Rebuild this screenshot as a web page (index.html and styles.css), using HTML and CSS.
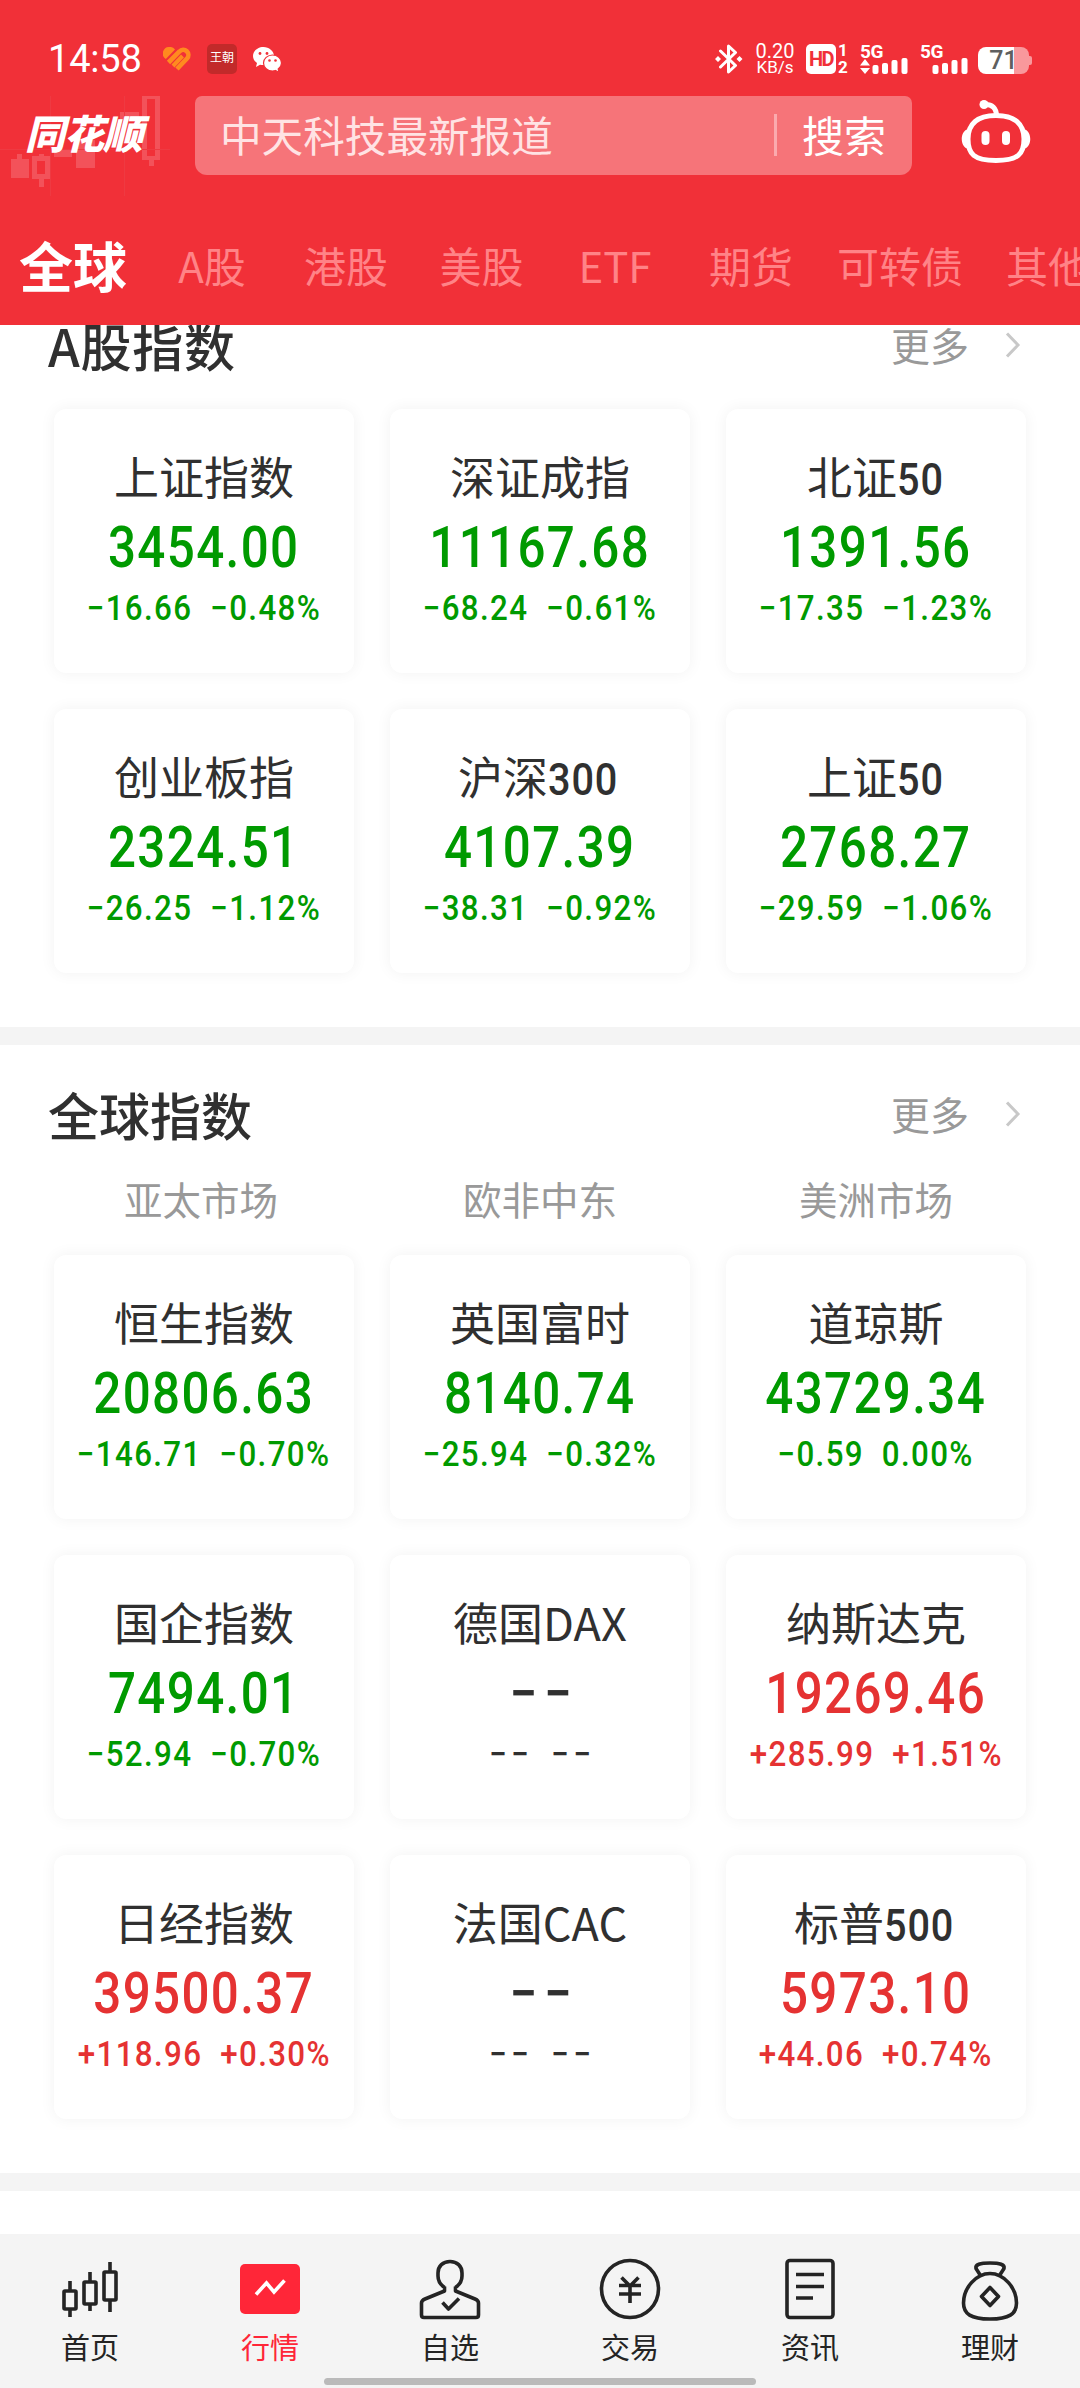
FILE: index.html
```html
<!DOCTYPE html>
<html lang="zh-CN">
<head>
<meta charset="utf-8">
<title>同花顺 行情</title>
<link rel="stylesheet" href="styles.css">
</head>
<body>
<div class="app">
  <header class="header">
    <svg class="backdrop" width="170" height="100" viewBox="0 96 170 100">
      <g fill="#f3525a">
        <path d="M11 159h6v-5h5v5h7v19H11z"/>
        <path fill-rule="evenodd" d="M32 156h7v-2h5v2h6v23h-6v8h-5v-8h-7zM37 161v13h8v-13z"/>
        <path d="M54 150h18v7H54zM76 140h19v28H76zM120 112h19v8h-19z"/>
        <path fill-rule="evenodd" d="M142 96h18v64h-6v6h-5v-6h-7zM147 99v57h8V99z"/>
      </g>
      <g fill="none" stroke="#ee3a42" stroke-width="1"><path d="M0 149.500h170M50.500 96v100M124.500 96v100"/></g>
    </svg>
    <div class="status">
      <span class="time">14:58</span>
      <svg class="s-heart" width="28" height="25" viewBox="0 0 28 25"><g fill="none" stroke="#ff8a1f"><path d="M6.500 0a6 6 0 0 1 5.500 2.500L2.800 12A6.500 6.500 0 0 1 6.500 0z" fill="#ff8a1f" stroke="none"/><path d="M5.500 15.500L16.500 4.500a4.800 4.800 0 0 1 7.500 7L14 22" stroke-width="4.600"/><path d="M10 19L19.500 9" stroke-width="4"/></g></svg>
      <span class="s-app">王朝</span>
      <svg class="s-wechat" width="29" height="26" viewBox="0 0 29 26"><path fill="#fff" d="M10.500 0C4.700 0 0 4 0 9c0 3 1.600 5.400 4 7l-1 4 4-2.300c1 .3 2.200.4 3.500.4C16 18 21 14 21 9S16 0 10.500 0z"/><path fill="#fff" stroke="#f13038" stroke-width="1.200" d="M19.500 8C14.500 8 10.500 11.700 10.500 16s4 8 9 8c1.100 0 2.100-.2 3-.5l3.500 2-.8-3.500c2-1.500 3.300-3.500 3.300-6C28.500 11.700 24.500 8 19.500 8z"/><g fill="#f13038"><circle cx="7" cy="6.500" r="1.400"/><circle cx="14" cy="6.500" r="1.400"/><circle cx="16.500" cy="13.500" r="1.300"/><circle cx="22.500" cy="13.500" r="1.300"/></g></svg>
      <span class="spacer"></span>
      <svg class="s-bt" width="28" height="30" viewBox="0 0 28 30"><path fill="none" stroke="#fff" stroke-width="3" stroke-linejoin="round" stroke-linecap="round" d="M5.500 7l15 14.500-7 6.500V2l7 6.500L5.500 23"/><path fill="#fff" d="M0 15l3-3 3 3-3 3zM21.500 15l3-3 3 3-3 3z"/></svg>
      <span class="speed"><b>0.20</b><i>KB/s</i></span>
      <span class="hd">HD</span>
      <span class="sims"><b>1</b><b>2</b></span>
      <span class="cell cell-one"><b>5G</b><svg width="48" height="30" viewBox="0 0 48 30"><g fill="#fff"><path d="M0 21.500l5-6.500 5 6.500zM0 24h10l-5 6z"/><rect x="12.500" y="21" width="6" height="9" rx="2"/><rect x="22" y="19" width="6" height="11" rx="2"/><rect x="31.500" y="16" width="6" height="14" rx="2"/><rect x="41.500" y="14" width="6" height="16" rx="2"/></g></svg></span>
      <span class="cell cell-two"><b>5G</b><svg width="48" height="30" viewBox="0 0 48 30"><g fill="#fff"><rect x="12.500" y="21" width="6" height="9" rx="2"/><rect x="22" y="19" width="6" height="11" rx="2"/><rect x="31.500" y="16" width="6" height="14" rx="2"/><rect x="41.500" y="14" width="6" height="16" rx="2"/></g></svg></span>
      <span class="battery">71</span>
    </div>
    <div class="toolbar">
      <div class="logo">同花顺</div>
      <div class="search"><span class="query">中天科技最新报道</span><span class="bar"></span><span class="go">搜索</span></div>
      <svg class="robot" width="72" height="66" viewBox="0 0 72 66"><g fill="none" stroke="#fff" stroke-width="5"><path d="M36 16.500C17 16.500 8 25 8 40S14 61.500 36 61.500 64 55 64 40 55 16.500 36 16.500z"/><path d="M24.500 5.500C32 5 36.500 9 36.500 17"/></g><g fill="#fff"><circle cx="24" cy="5.500" r="4.500"/><path d="M7 30.500C0 33 0 47 7 49.500zM65 30.500C72 33 72 47 65 49.500z"/><rect x="21.500" y="32" width="8" height="14" rx="4"/><rect x="42" y="32" width="8" height="14" rx="4"/></g></svg>
    </div>
    <nav class="tabs">
      <span class="tab active">全球</span><span class="tab">A股</span><span class="tab">港股</span><span class="tab">美股</span><span class="tab">ETF</span><span class="tab">期货</span><span class="tab">可转债</span><span class="tab">其他</span>
    </nav>
  </header>

  <main class="content">
    <section class="section section-a">
      <div class="head"><h2>A股指数</h2><span class="more">更多<svg width="16" height="26" viewBox="0 0 16 26"><path d="M2 1.500L13 13 2 24.500" fill="none" stroke="#c8c8c8" stroke-width="3"/></svg></span></div>
      <div class="grid">
        <article class="card down"><h3>上证指数</h3><strong>3454.00</strong><p><span>−16.66</span><span>−0.48%</span></p></article>
        <article class="card down"><h3>深证成指</h3><strong>11167.68</strong><p><span>−68.24</span><span>−0.61%</span></p></article>
        <article class="card down"><h3>北证<em>50</em></h3><strong>1391.56</strong><p><span>−17.35</span><span>−1.23%</span></p></article>
        <article class="card down"><h3>创业板指</h3><strong>2324.51</strong><p><span>−26.25</span><span>−1.12%</span></p></article>
        <article class="card down"><h3>沪深<em>300</em></h3><strong>4107.39</strong><p><span>−38.31</span><span>−0.92%</span></p></article>
        <article class="card down"><h3>上证<em>50</em></h3><strong>2768.27</strong><p><span>−29.59</span><span>−1.06%</span></p></article>
      </div>
    </section>
    <section class="section section-global">
      <div class="head"><h2>全球指数</h2><span class="more">更多<svg width="16" height="26" viewBox="0 0 16 26"><path d="M2 1.500L13 13 2 24.500" fill="none" stroke="#c8c8c8" stroke-width="3"/></svg></span></div>
      <div class="regions"><span>亚太市场</span><span>欧非中东</span><span>美洲市场</span></div>
      <div class="grid">
        <article class="card down"><h3>恒生指数</h3><strong>20806.63</strong><p><span>−146.71</span><span>−0.70%</span></p></article>
        <article class="card down"><h3>英国富时</h3><strong>8140.74</strong><p><span>−25.94</span><span>−0.32%</span></p></article>
        <article class="card down"><h3>道琼斯</h3><strong>43729.34</strong><p><span>−0.59</span><span>0.00%</span></p></article>
        <article class="card down"><h3>国企指数</h3><strong>7494.01</strong><p><span>−52.94</span><span>−0.70%</span></p></article>
        <article class="card flat"><h3>德国DAX</h3><strong>−−</strong><p><span>−−</span><span>−−</span></p></article>
        <article class="card up"><h3>纳斯达克</h3><strong>19269.46</strong><p><span>+285.99</span><span>+1.51%</span></p></article>
        <article class="card up"><h3>日经指数</h3><strong>39500.37</strong><p><span>+118.96</span><span>+0.30%</span></p></article>
        <article class="card flat"><h3>法国CAC</h3><strong>−−</strong><p><span>−−</span><span>−−</span></p></article>
        <article class="card up"><h3>标普<em>500</em></h3><strong>5973.10</strong><p><span>+44.06</span><span>+0.74%</span></p></article>
      </div>
    </section>
  </main>

  <footer class="dock">
    <nav class="dock-items">
      <a class="item"><svg width="64" height="64" viewBox="0 0 64 64"><g fill="none" stroke="#242424" stroke-width="3.600"><rect x="6" y="33" width="12" height="18" rx="1"/><rect x="26" y="24" width="12" height="22" rx="1"/><rect x="46" y="14" width="12" height="28" rx="1"/><path d="M12 23v10M12 51v8M32 14v10M32 46v7M52 4v10M52 42v12"/></g></svg><span>首页</span></a>
      <a class="item current"><svg width="64" height="64" viewBox="0 0 64 64"><rect x="2" y="6" width="60" height="50" rx="5" fill="#ff2638"/><path d="M18 36.500L28.500 25 36 34 46.500 22.500" fill="none" stroke="#fff" stroke-width="3.600"/></svg><span>行情</span></a>
      <a class="item"><svg width="64" height="64" viewBox="0 0 64 64"><g fill="none" stroke="#242424" stroke-width="3.600" stroke-linejoin="round"><path d="M26.500 28.500V33L7 41Q3.500 42.500 3.500 45V57Q3.500 59.500 6 59.500H58Q60.500 59.500 60.500 57V45Q60.500 42.500 57 41L37.500 33V28.500M26.500 29.500C21.500 26 20 22 20 18V15C20 8 25 3.500 32 3.500S44 8 44 15V18C44 22 42.500 26 37.500 29.500"/><path d="M24.500 44.500L30.500 51 41 40.500"/></g></svg><span>自选</span></a>
      <a class="item"><svg width="64" height="64" viewBox="0 0 64 64"><g fill="none" stroke="#242424" stroke-width="3.600"><circle cx="32" cy="31" r="28.500"/><path d="M23.500 19.500L32 28l8.500-8.500M21 27.500h22M21 36h22M32 27v18"/></g></svg><span>交易</span></a>
      <a class="item"><svg width="64" height="64" viewBox="0 0 64 64"><g fill="none" stroke="#242424" stroke-width="3.600"><rect x="9" y="2.500" width="46" height="57" rx="3"/><path d="M18 16.500h28M18 28.500h28M18 40h17"/></g></svg><span>资讯</span></a>
      <a class="item"><svg width="64" height="64" viewBox="0 0 64 64"><g fill="none" stroke="#242424" stroke-width="3.600" stroke-linejoin="round"><path d="M32 15.500C46 15.500 58.500 30 58.500 45 58.500 56 51 61 32 61S5.500 56 5.500 45C5.500 30 18 15.500 32 15.500z"/><path d="M22.500 17.500L18 10.500C17 6.500 22 5 32 5S47 6.500 46 10.500L41.500 17.500"/><path d="M32 29.500l8.500 9-8.500 9-8.500-9z"/></g></svg><span>理财</span></a>
    </nav>
    <div class="home-bar"></div>
  </footer>
</div>
</body>
</html>
```
FILE: styles.css
```css
* { box-sizing: border-box; }
body { margin: 0; background: #fff; color: #303030; font-family: Roboto, "Noto Sans CJK SC", sans-serif; }
h2, h3, p { margin: 0; font-weight: 400; }
b, i, em { font-style: normal; font-weight: inherit; }
.app { display: flex; flex-direction: column; width: 1080px; height: 2388px; overflow: hidden; }

.header { position: relative; flex: none; height: 325px; background: #f13038; color: #fff; }
.backdrop { position: absolute; left: 0; top: 96px; }
.status { position: relative; display: flex; align-items: flex-start; height: 96px; padding: 44px 51px 0 48px; }
.spacer { flex: 1; }
.time { width: 115px; font-size: 38px; line-height: 31px; letter-spacing: -0.2px; }
.s-heart { margin: 3px 16px 0 0; }
.s-app { width: 30px; height: 30px; margin-right: 16px; border-radius: 5px; background: #c22a2a; font-size: 12px; line-height: 29px; text-align: center; white-space: nowrap; }
.s-wechat { margin-top: 3px; }
.s-bt { margin-right: 13px; }
.speed { display: flex; flex-direction: column; align-items: center; width: 38px; margin-right: 12px; }
.speed b { font-size: 20px; line-height: 15px; }
.speed i { margin-top: 1px; font-size: 17px; line-height: 15px; }
.hd { width: 30px; height: 30px; margin-right: 2px; border-radius: 5px; background: #fff; color: #f13038; font-size: 20px; font-weight: 700; line-height: 31px; text-align: center; letter-spacing: -1.5px; }
.sims { display: flex; flex-direction: column; width: 10px; margin-right: 12px; font-size: 17px; font-weight: 700; line-height: 13px; gap: 4px; text-align: center; }
.cell { display: grid; width: 48px; height: 30px; }
.cell > * { grid-area: 1 / 1; }
.cell b { font-size: 19px; font-weight: 700; line-height: 15px; letter-spacing: -0.5px; }
.cell-one { margin-right: 12px; }
.cell-two { margin-right: 10px; }
.battery { position: relative; width: 51px; height: 27px; margin-top: 3px; border-radius: 8px; background: linear-gradient(90deg, #fff 36px, #f9989c 36px); color: #5f5f5f; font-size: 25px; font-weight: 500; line-height: 28px; text-align: center; }
.battery::after { content: ""; position: absolute; right: -3px; top: 9px; width: 3px; height: 9px; border-radius: 0 2px 2px 0; background: #f9989c; }

.toolbar { position: relative; display: flex; height: 79px; padding-left: 25px; }
.logo { width: 170px; font-family: "Noto Sans CJK SC", sans-serif; font-size: 40px; font-weight: 900; font-style: italic; line-height: 72px; letter-spacing: -1px; }
.search { display: flex; align-items: center; width: 717px; height: 79px; padding: 0 26px 4px 25px; border-radius: 7px 7px 12px 12px; background: #f67479; font-size: 42px; }
.query { flex: 1; color: #ffe3e4; font-size: 41.6px; }
.bar { width: 3px; height: 42px; margin: 3px 25px 0 0; background: #fbaaae; }
.robot { margin: 3px 0 0 48px; }

.tabs { display: grid; grid-template-columns: 146px 132px 136px 135px 132px 140px 158px 138px; align-items: center; height: 150px; padding-top: 30px; overflow: hidden; font-family: "Noto Sans CJK SC", sans-serif; font-size: 42px; line-height: 60px; text-align: center; color: #ff8387; }
.tab.active { color: #fff; font-size: 54px; font-weight: 700; }

.content { flex: 1; min-height: 0; overflow: hidden; font-family: "Noto Sans CJK SC", sans-serif; }
.section { border-bottom: 18px solid #f4f4f4; }
.section-a { height: 720px; }
.section-global { height: 1146px; padding-top: 33px; }
.head { display: flex; justify-content: space-between; align-items: center; padding: 0 59px 8px 48px; }
.section-a .head { height: 48px; }
.section-global .head { height: 80px; }
h2 { font-size: 51px; font-weight: 500; line-height: 60px; }
.section-a h2 { letter-spacing: 0.8px; }
.more { display: flex; align-items: center; gap: 36px; margin-top: -3px; color: #999; font-size: 39px; line-height: 50px; }
.more svg { margin-top: 3px; }
.regions { display: grid; grid-template-columns: repeat(3, 300px); gap: 36px; height: 97px; padding-left: 54px; color: #999; font-size: 38.5px; line-height: 80px; text-align: center; }
.regions span:first-child { margin-left: -6px; }
.grid { display: grid; grid-template-columns: repeat(3, 300px); grid-auto-rows: 264px; gap: 36px; padding-left: 54px; }
.section-a .grid { margin-top: 36px; }
.card { display: flex; flex-direction: column; align-items: center; padding-top: 39px; border-radius: 12px; background: #fff; box-shadow: 0 0 16px rgba(0, 0, 0, .055); white-space: nowrap; }
.card h3 { height: 56px; color: #303030; font-size: 45px; line-height: 56px; }
.card em { display: inline-block; margin-right: -4px; font-family: Roboto, sans-serif; font-size: 44px; font-weight: 500; line-height: 50px; letter-spacing: 1px; transform: scaleX(.9); transform-origin: left; }
.card strong { margin-top: 10px; font-family: Roboto, sans-serif; font-size: 57px; font-weight: 500; line-height: 68px; letter-spacing: 1.6px; transform: scaleX(.865); }
.card p { display: flex; gap: 20px; margin-top: 5px; font-family: Roboto, sans-serif; font-size: 35px; font-weight: 500; line-height: 44px; letter-spacing: 1.5px; transform: scaleX(.895); }
.down { color: #009a00; }
.up { color: #e53232; }
.flat strong { margin-right: -8px; letter-spacing: 8px; }
.flat p { margin-right: -5px; letter-spacing: 5px; }

.dock { position: relative; flex: none; height: 154px; background: #f4f4f4; }
.dock-items { display: grid; grid-template-columns: repeat(6, 180px); padding-top: 24px; }
.item { display: flex; flex-direction: column; align-items: center; color: #242424; font-family: "Noto Sans CJK SC", sans-serif; font-size: 29px; line-height: 40px; }
.item span { margin-top: 4px; }
.current { color: #ff2638; }
.home-bar { position: absolute; left: 324px; bottom: 3px; width: 432px; height: 7px; border-radius: 4px; background: #bababa; }
```
